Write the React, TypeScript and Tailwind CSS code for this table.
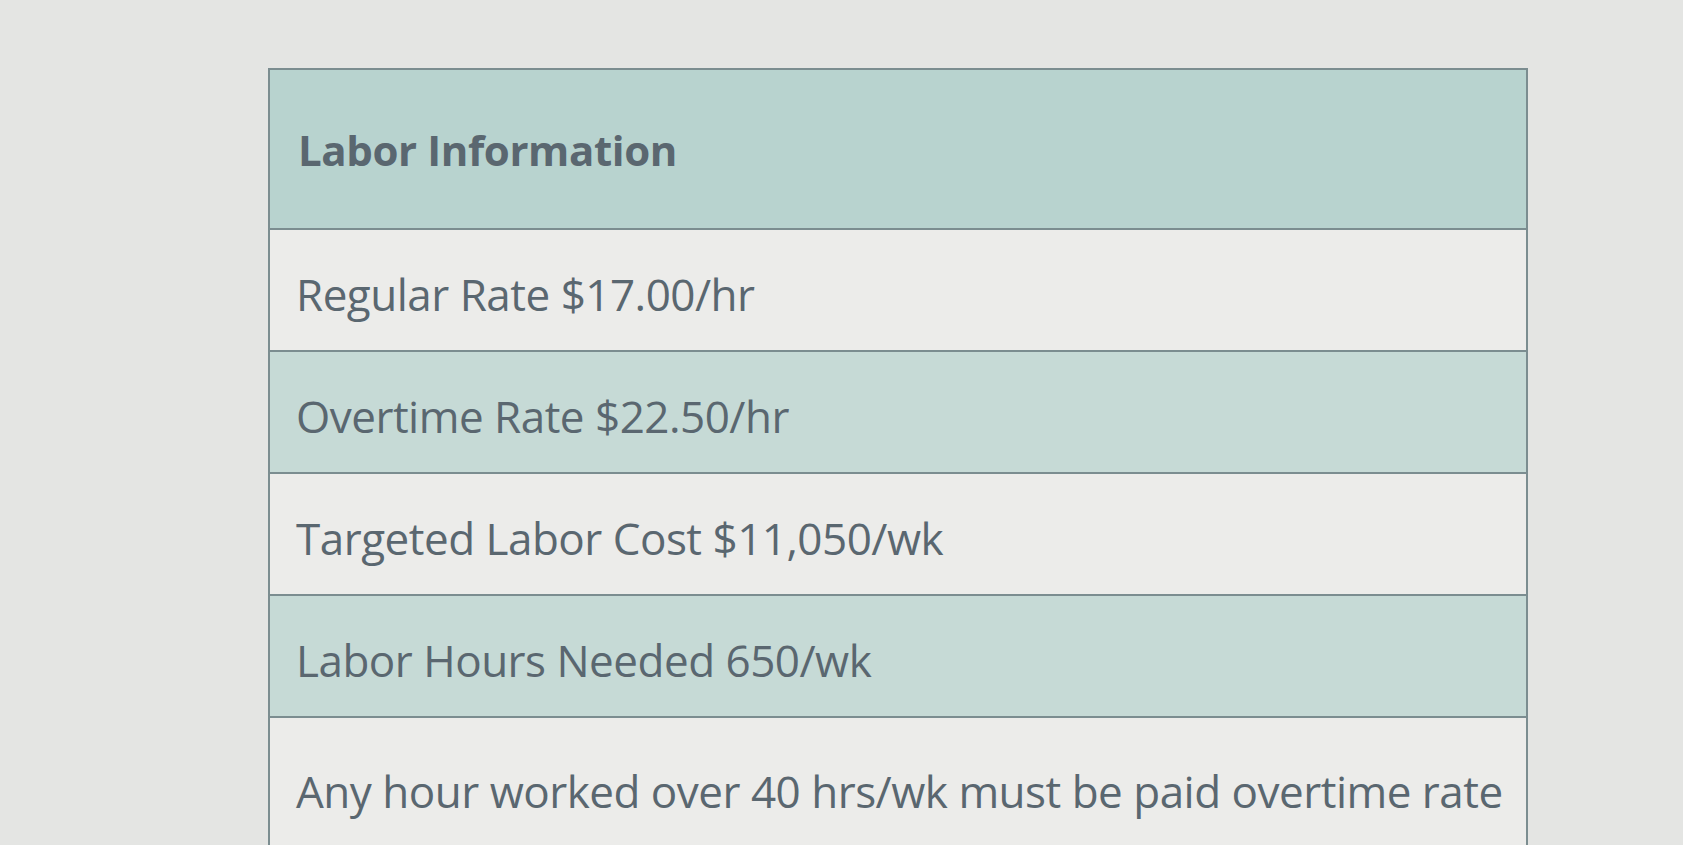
import React from 'react';

const rows = [
  { text: 'Regular Rate $17.00/hr', shaded: false },
  { text: 'Overtime Rate $22.50/hr', shaded: true },
  { text: 'Targeted Labor Cost $11,050/wk', shaded: false },
  { text: 'Labor Hours Needed 650/wk', shaded: true },
  { text: 'Any hour worked over 40 hrs/wk must be paid overtime rate', shaded: false },
];

export default function App() {
  return (
    <div
      className="w-[1683px] h-[845px] overflow-hidden bg-[#e4e5e3] pt-[68px] pl-[268px]"
      style={{ fontFamily: '"Open Sans", "Noto Sans", sans-serif' }}
    >
      <div className="w-[1260px] border-2 border-[#7b8d90] text-[#5a6770]">
        <div className="h-[160px] bg-[#b8d3cf] flex items-center px-[28px] border-b-2 border-[#7b8d90]">
          <h2 className="text-[42px] font-bold tracking-[-0.4px]">Labor Information</h2>
        </div>
        {rows.map((row, i) => (
          <div
            key={row.text}
            className={`flex px-[26px] border-b-2 border-[#7b8d90] ${
              i === rows.length - 1 ? 'h-[150px] items-start pt-[40px]' : 'h-[122px] items-center pt-[8px]'
            } ${row.shaded ? 'bg-[#c6dad6]' : 'bg-[#ececea]'}`}
          >
            <span className="text-[44px] font-medium tracking-[-0.5px] whitespace-nowrap">{row.text}</span>
          </div>
        ))}
      </div>
    </div>
  );
}
